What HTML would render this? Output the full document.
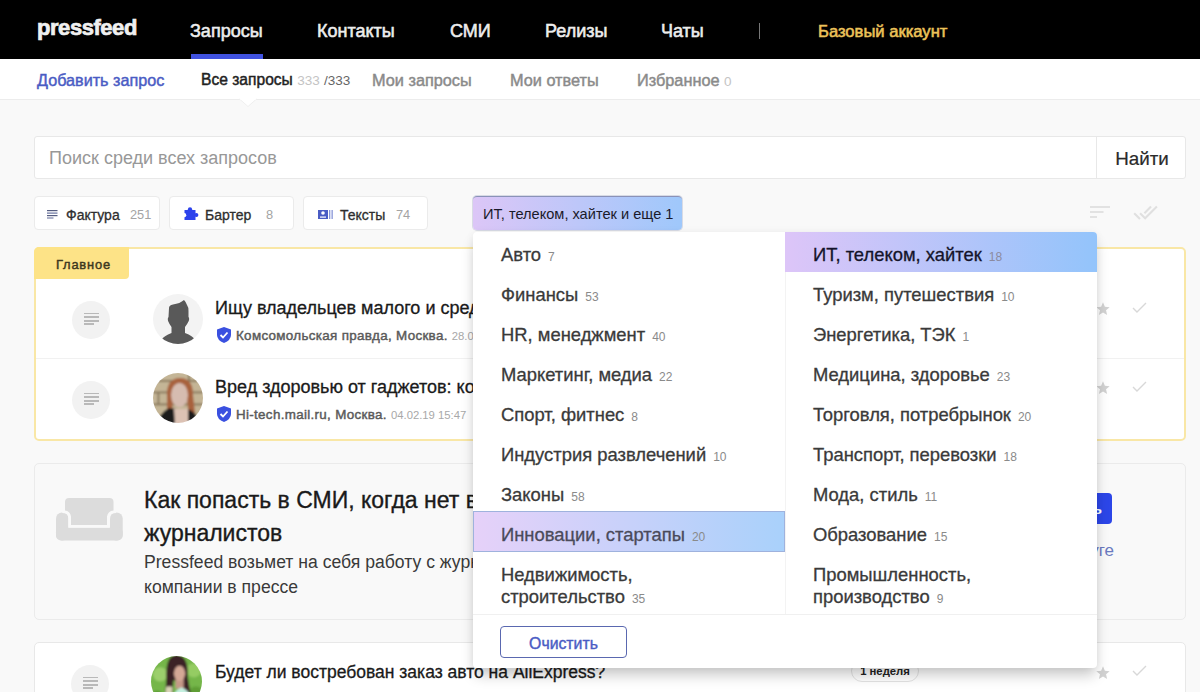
<!DOCTYPE html>
<html><head><meta charset="utf-8">
<style>
*{box-sizing:border-box;margin:0;padding:0}
html,body{width:1200px;height:692px;overflow:hidden;background:#f9f9f9;font-family:"Liberation Sans",sans-serif;color:#222;position:relative}
.a{position:absolute;white-space:nowrap}
#hdr{position:absolute;left:0;top:0;width:1200px;height:59px;background:#000}
#hdr .t{position:absolute;top:20px;font-size:18px;color:#ededed;line-height:22px;-webkit-text-stroke:0.55px currentColor}
#logo{position:absolute;left:37px;top:14px;font-size:22px;font-weight:bold;color:#f0f0f0;letter-spacing:-0.45px;line-height:28px;-webkit-text-stroke:0.7px currentColor}
#ul{position:absolute;left:191px;top:54px;width:72px;height:5px;background:#4052e0}
#sep{position:absolute;left:759px;top:23px;width:1px;height:16px;background:#777}
#sub{position:absolute;left:0;top:59px;width:1200px;height:41px;background:#fff;border-bottom:1px solid #ececec}
#sub .t{position:absolute;top:12px;font-size:16.3px;line-height:18px;color:#8a8a8a;-webkit-text-stroke:0.45px currentColor}
#sub .c{font-size:13.5px;font-weight:normal;color:#c4c4c4;-webkit-text-stroke:0}
#search{position:absolute;left:34px;top:136px;width:1152px;height:43px;background:#fff;border:1px solid #e8e8e8;border-radius:3px}
#search .ph{position:absolute;left:14px;top:11px;font-size:18px;color:#989898;line-height:20px}
#search .btn{position:absolute;right:0;top:0;width:89px;height:41px;border-left:1px solid #e8e8e8;font-size:18.8px;line-height:43px;text-align:center;color:#2a2a2a;padding-left:2px;-webkit-text-stroke:0.2px currentColor}
.chip{position:absolute;top:196px;height:34px;background:#fff;border:1px solid #ebebeb;border-radius:4px;font-size:14px;line-height:32px;color:#333;white-space:nowrap}
.chip .n{position:absolute;top:2px;color:#a4a4a4;font-size:12.8px}
.chip .l{position:absolute;top:1.5px;-webkit-text-stroke:0.3px currentColor;color:#2e2e2e}
.card{position:absolute;left:34px;width:1152px;background:#fff;border:1px solid #e8e8e8;border-radius:5px}
.doc{position:absolute;width:38px;height:38px;border-radius:50%;background:#f2f2f2}
.doc i{position:absolute;left:12px;height:1.8px;background:#b9b9b9}
.title{position:absolute;font-size:18px;line-height:22px;color:#1a1a1a;white-space:nowrap;-webkit-text-stroke:0.3px currentColor}
.meta{position:absolute;font-size:13.4px;letter-spacing:0.32px;line-height:16px;color:#5a5a5a;white-space:nowrap;-webkit-text-stroke:0.45px currentColor}
.meta .d{font-weight:normal;color:#a8a8a8;font-size:11.3px;letter-spacing:0;-webkit-text-stroke:0}
.star{position:absolute;color:#dcdcdc;font-size:18px;line-height:18px}
.chk{position:absolute}
#dd{position:absolute;left:473px;top:232px;width:624px;height:436px;background:#fff;border-radius:4px;box-shadow:0 9px 14px -2px rgba(0,0,0,.22),0 0 8px rgba(0,0,0,.05)}
#dd .it{position:absolute;font-size:18.4px;line-height:22px;color:#3a3a3a;white-space:nowrap;-webkit-text-stroke:0.3px currentColor;margin-top:2px}
#dd .it span{font-size:12px;color:#8a8a8a;margin-left:7px;-webkit-text-stroke:0}
</style></head><body>
<div id="hdr">
  <div id="logo">pressfeed</div>
  <div class="t" style="left:190px">Запросы</div>
  <div class="t" style="left:317px">Контакты</div>
  <div class="t" style="left:450px">СМИ</div>
  <div class="t" style="left:545px">Релизы</div>
  <div class="t" style="left:661px">Чаты</div>
  <div id="sep"></div>
  <div class="t" style="left:818px;top:21px;color:#ecc35a;font-size:16.6px">Базовый аккаунт</div>
  <div id="ul"></div>
</div>
<div id="sub">
  <div class="t" style="left:37px;color:#4a5cc4;font-size:16.2px">Добавить запрос</div>
  <div class="t" style="left:201px;color:#222;font-size:15.6px">Все запросы <span class="c">333</span> <span class="c" style="color:#666">/333</span></div>
  <div class="t" style="left:372px">Мои запросы</div>
  <div class="t" style="left:510px">Мои ответы</div>
  <div class="t" style="left:637px">Избранное <span class="c">0</span></div>
</div>
<svg class="a" style="left:239px;top:98px" width="18" height="10"><path d="M0.5 1 L9 8.5 L17.5 1" fill="#fff" stroke="#efefef" stroke-width="1"/><rect x="1" y="0" width="16" height="1.6" fill="#fff"/></svg>

<div id="search">
  <div class="ph">Поиск среди всех запросов</div>
  <div class="btn">Найти</div>
</div>

<div class="chip" style="left:34px;width:126px">
  <svg class="a" style="left:12px;top:13px" width="11" height="9"><rect y="0" width="10.5" height="1.2" fill="#555d80"/><rect y="2.5" width="10.5" height="1.2" fill="#6a74a0"/><rect y="5" width="10.5" height="1.2" fill="#555d80"/><rect y="7.4" width="6.5" height="1.2" fill="#7a82a8"/></svg>
  <span class="l" style="left:31px">Фактура</span><span class="n" style="left:95px">251</span>
</div>
<div class="chip" style="left:169px;width:125px">
  <svg class="a" style="left:14px;top:10px" width="16" height="14" viewBox="0 0 16 14"><rect x="0.5" y="3" width="11" height="10" fill="#2c42ec"/><circle cx="6" cy="2.3" r="2.1" fill="#2c42ec"/><circle cx="12.3" cy="8" r="2.1" fill="#2c42ec"/><circle cx="0.2" cy="8.2" r="2.1" fill="#fff"/></svg>
  <span class="l" style="left:35px">Бартер</span><span class="n" style="left:96px">8</span>
</div>
<div class="chip" style="left:303px;width:125px">
  <svg class="a" style="left:14px;top:13px" width="15" height="9"><rect x="0" y="0" width="10" height="9" fill="#4a5cc4"/><circle cx="5" cy="3" r="1.8" fill="#fff"/><rect x="2" y="6.5" width="6" height="1.2" fill="#fff"/><rect x="11" y="0" width="1.3" height="9" fill="#8896d8"/><rect x="13.5" y="0" width="1.3" height="9" fill="#8896d8"/></svg>
  <span class="l" style="left:36px">Тексты</span><span class="n" style="left:92px">74</span>
</div>
<div class="a" style="left:473px;top:196px;width:209px;height:34px;border-radius:4px;background:linear-gradient(90deg,#dcc6f7,#9fc8fb);border-top:1px solid #8a92b8;box-shadow:0 0 0 1px rgba(120,130,170,.25);font-size:14.6px;line-height:34px;color:#1a1a2a;padding-left:10px">ИТ, телеком, хайтек и еще 1</div>

<svg class="a" style="left:1089px;top:205px" width="22" height="14"><rect x="1" y="1" width="20" height="2" fill="#e2e2e2"/><rect x="1" y="6" width="13.5" height="2" fill="#e2e2e2"/><rect x="1" y="11" width="7" height="2" fill="#e2e2e2"/></svg>
<svg class="a" style="left:1133px;top:200px" width="25" height="25" viewBox="0 0 24 24"><path fill="#e0e0e0" d="M18 7l-1.41-1.41-6.34 6.34 1.41 1.41L18 7zm4.24-1.41L11.66 16.17 7.48 12l-1.41 1.41L11.66 19l12-12-1.42-1.41zM.41 13.41L6 19l1.41-1.41L1.83 12 .41 13.41z"/></svg>

<!-- Главное card -->
<div class="a" style="left:34px;top:247px;width:1152px;height:194px;background:#fff;border:2px solid #f9e7a6;border-radius:5px"></div>
<div class="a" style="left:34px;top:247px;width:95px;height:32px;background:#fde387;border-radius:5px 0 4px 0;font-size:12.9px;letter-spacing:0.8px;color:#3e3820;line-height:36px;padding-left:22px;-webkit-text-stroke:0.45px currentColor">Главное</div>
<div class="a" style="left:36px;top:358px;width:1148px;height:1px;background:#f1f1f1"></div>

<div class="doc" style="left:72px;top:301px"><i style="top:11.6px;width:15px"></i><i style="top:15.2px;width:15px"></i><i style="top:18.8px;width:15px"></i><i style="top:22.4px;width:9.5px"></i></div>
<svg class="a" style="left:153px;top:294px" width="50" height="50" viewBox="0 0 50 50"><circle cx="25" cy="25" r="25" fill="#f3f3f3"/><clipPath id="c1"><circle cx="25" cy="25" r="25"/></clipPath><g clip-path="url(#c1)" fill="#595959"><path d="M16 14 Q16 11 20 10.5 Q27 9.5 31 6 Q33 8 34 11 Q35.5 13 35.5 17 L35.5 23 Q36.8 24.5 35.5 27.5 Q34 30.5 32 33 L32 39 Q40 42 42 46 L42 52 L8 52 L8 46 Q11 42 18.5 39 L18.5 33 Q16.5 30.5 15.3 27.5 Q14.2 24.5 15.5 23 Z"/></g></svg>
<div class="title" style="left:215px;top:297px">Ищу владельцев малого и среднего бизнеса</div>
<svg class="a" style="left:217px;top:327px" width="14" height="16" viewBox="0 0 14 16"><path d="M7 0 L14 2.5 V8 Q14 13 7 16 Q0 13 0 8 V2.5 Z" fill="#3a50e0"/><path d="M3.5 8 L6 10.5 L10.5 5.5" stroke="#fff" stroke-width="1.8" fill="none"/></svg>
<div class="meta" style="left:236px;top:328px">Комсомольская правда, Москва. <span class="d">28.02.19 12:10</span></div>
<svg class="a" style="left:1095px;top:301px" width="16" height="16" viewBox="0 0 24 24"><path fill="#d2d2d2" d="M12 17.27L18.18 21l-1.64-7.03L22 9.24l-7.19-.61L12 2 9.19 8.63 2 9.24l5.46 4.73L5.82 21z"/></svg>
<svg class="chk" style="left:1132px;top:302px" width="15" height="12"><path d="M1 6 L5 10 L14 1" stroke="#d8d8d8" stroke-width="1.4" fill="none"/></svg>

<div class="doc" style="left:72px;top:381px"><i style="top:11.6px;width:15px"></i><i style="top:15.2px;width:15px"></i><i style="top:18.8px;width:15px"></i><i style="top:22.4px;width:9.5px"></i></div>
<svg class="a" style="left:153px;top:373px" width="50" height="50" viewBox="0 0 50 50"><clipPath id="c2"><circle cx="25" cy="25" r="25"/></clipPath><filter id="bl2" x="-10%" y="-10%" width="120%" height="120%"><feGaussianBlur stdDeviation="1"/></filter><g clip-path="url(#c2)"><g filter="url(#bl2)"><rect x="-2" y="-2" width="54" height="54" fill="#c4b596"/><rect x="-2" y="7" width="54" height="1.8" fill="#857458"/><rect x="-2" y="18.5" width="54" height="1.8" fill="#857458"/><rect x="-2" y="30.5" width="54" height="1.8" fill="#857458"/><rect x="4.5" y="19" width="1.8" height="12" fill="#857458"/><rect x="35" y="1" width="1.8" height="7" fill="#857458"/><path d="M14 24 Q13 5 27 5 Q40 5 40 22 L42 40 L36 44 L34 26 L20 26 L19 40 L14 38 Z" fill="#a8623e"/><ellipse cx="26.5" cy="22" rx="8.5" ry="12" fill="#d6bcb0"/><path d="M4 52 Q6 40 16 35 L24 36 L22 52 Z" fill="#1c1c1c"/><path d="M34 36 Q43 38 46 48 L46 52 L34 52 Z" fill="#1c1c1c"/><path d="M21 36 L35 36 L35 52 L22 52 Z" fill="#dcc2b4"/></g></g></svg>
<div class="title" style="left:215px;top:376px">Вред здоровью от гаджетов: кого это касается</div>
<svg class="a" style="left:217px;top:406px" width="14" height="16" viewBox="0 0 14 16"><path d="M7 0 L14 2.5 V8 Q14 13 7 16 Q0 13 0 8 V2.5 Z" fill="#3a50e0"/><path d="M3.5 8 L6 10.5 L10.5 5.5" stroke="#fff" stroke-width="1.8" fill="none"/></svg>
<div class="meta" style="left:236px;top:407px">Hi-tech.mail.ru, Москва. <span class="d">04.02.19 15:47</span></div>
<svg class="a" style="left:1095px;top:380px" width="16" height="16" viewBox="0 0 24 24"><path fill="#d2d2d2" d="M12 17.27L18.18 21l-1.64-7.03L22 9.24l-7.19-.61L12 2 9.19 8.63 2 9.24l5.46 4.73L5.82 21z"/></svg>
<svg class="chk" style="left:1132px;top:381px" width="15" height="12"><path d="M1 6 L5 10 L14 1" stroke="#d8d8d8" stroke-width="1.4" fill="none"/></svg>

<!-- promo card -->
<div class="a" style="left:34px;top:463px;width:1152px;height:157px;background:#f9f9f9;border:1.5px solid #ebebeb;border-radius:5px"></div>
<svg class="a" style="left:55px;top:497px" width="69" height="44" viewBox="0 0 69 44"><rect x="1" y="15.5" width="12.5" height="28" rx="6" fill="#dcdcdc"/><rect x="55" y="15.5" width="12.7" height="28" rx="6" fill="#dcdcdc"/><rect x="1" y="30.5" width="66.7" height="13" rx="5" fill="#dcdcdc"/><path d="M14 1 H54.5 Q58.5 1 58.5 5 V13.5 Q53 14 52 19.5 V28 H16 V19.5 Q15 14 10 13.5 V5 Q10 1 14 1 Z" fill="#dcdcdc" stroke="#f9f9f9" stroke-width="5.4" paint-order="stroke"/></svg>
<div class="a" style="left:144px;top:484px;font-size:23px;line-height:32.5px;color:#1a1a1a;-webkit-text-stroke:0.35px currentColor">Как попасть в СМИ, когда нет возможности общаться с<br>журналистов</div>
<div class="a" style="left:144px;top:550px;font-size:17.6px;line-height:25px;color:#3a3a3a">Pressfeed возьмет на себя работу с журналистами и размещение<br>компании в прессе</div>
<div class="a" style="left:972px;top:493px;width:140px;height:31px;background:#2c46e8;border-radius:4px;color:#fff;font-size:15px;font-weight:bold;line-height:31px;text-align:right;padding-right:10px">Подключить</div>
<div class="a" style="left:900px;top:541px;width:214px;text-align:right;font-size:17px;line-height:20px;color:#6a7ac0">Об услуге</div>

<!-- card 3 -->
<div class="a" style="left:34px;top:642px;width:1152px;height:80px;background:#fff;border:1px solid #e8e8e8;border-radius:5px"></div>
<div class="doc" style="left:71px;top:665px"><i style="top:11.6px;width:15px"></i><i style="top:15.2px;width:15px"></i><i style="top:18.8px;width:15px"></i><i style="top:22.4px;width:9.5px"></i></div>
<svg class="a" style="left:151px;top:656px" width="51" height="51" viewBox="0 0 50 50"><clipPath id="c3"><circle cx="25" cy="25" r="25"/></clipPath><filter id="bl3" x="-10%" y="-10%" width="120%" height="120%"><feGaussianBlur stdDeviation="0.9"/></filter><g clip-path="url(#c3)"><g filter="url(#bl3)"><rect x="-2" y="-2" width="54" height="54" fill="#74b64a"/><circle cx="9" cy="18" r="7" fill="#9ccf6c"/><circle cx="42" cy="14" r="7" fill="#95cc64"/><circle cx="44" cy="38" r="8" fill="#5e9e36"/><circle cx="6" cy="40" r="6" fill="#5a9a34"/><path d="M15 22 Q14 -1 25 -1 Q37 -1 36 20 L39 38 L31 38 L31 24 L22 24 L21 38 L14 37 Z" fill="#3b2226"/><rect x="24" y="22" width="8" height="10" fill="#c49888"/><ellipse cx="28" cy="17" rx="5.5" ry="7.5" fill="#d4a896"/><path d="M12 52 L15 30 L21 30 L20 52 Z" fill="#d8d2b4"/><path d="M19 52 Q21 33 30 31 Q39 33 43 52 Z" fill="#c4f0e0"/></g></g></svg>
<div class="title" style="left:215px;top:661px;font-size:17.5px">Будет ли востребован заказ авто на AliExpress?</div>
<div class="a" style="left:851px;top:660px;width:68px;height:22px;border:1px solid #e4e4e4;border-radius:11px;background:#fff;font-size:11.3px;font-weight:bold;line-height:20px;text-align:center;color:#222">1 неделя</div>
<svg class="a" style="left:1095px;top:665px" width="16" height="16" viewBox="0 0 24 24"><path fill="#d2d2d2" d="M12 17.27L18.18 21l-1.64-7.03L22 9.24l-7.19-.61L12 2 9.19 8.63 2 9.24l5.46 4.73L5.82 21z"/></svg>
<svg class="chk" style="left:1132px;top:665px" width="15" height="12"><path d="M1 6 L5 10 L14 1" stroke="#d8d8d8" stroke-width="1.4" fill="none"/></svg>

<!-- dropdown -->
<div id="dd">
  <div class="a" style="left:312px;top:0;width:312px;height:40px;background:linear-gradient(90deg,#ddc5f8,#93c4fb);border-radius:0 4px 0 0"></div>
  <div class="a" style="left:0;top:279px;width:312px;height:41px;background:linear-gradient(90deg,#e6d1f9,#a9d1fb);border:1px solid #9fb2dd"></div>
  <div class="a" style="left:312px;top:40px;width:1px;height:342px;background:#f3f3f3"></div>
  <div class="a" style="left:0;top:382px;width:624px;height:1px;background:#f0f0f0"></div>

  <div class="it" style="left:28px;top:10px">Авто<span>7</span></div>
  <div class="it" style="left:28px;top:50px">Финансы<span>53</span></div>
  <div class="it" style="left:28px;top:90px">HR, менеджмент<span>40</span></div>
  <div class="it" style="left:28px;top:130px">Маркетинг, медиа<span>22</span></div>
  <div class="it" style="left:28px;top:170px">Спорт, фитнес<span>8</span></div>
  <div class="it" style="left:28px;top:210px">Индустрия развлечений<span>10</span></div>
  <div class="it" style="left:28px;top:250px">Законы<span>58</span></div>
  <div class="it" style="left:28px;top:290px;color:#4a4a5a">Инновации, стартапы<span>20</span></div>
  <div class="it" style="left:28px;top:330px">Недвижимость,<br>строительство<span>35</span></div>

  <div class="it" style="left:340px;top:10px;color:#14142a">ИТ, телеком, хайтек<span style="color:#8a8aa0">18</span></div>
  <div class="it" style="left:340px;top:50px">Туризм, путешествия<span>10</span></div>
  <div class="it" style="left:340px;top:90px">Энергетика, ТЭК<span>1</span></div>
  <div class="it" style="left:340px;top:130px">Медицина, здоровье<span>23</span></div>
  <div class="it" style="left:340px;top:170px">Торговля, потребрынок<span>20</span></div>
  <div class="it" style="left:340px;top:210px">Транспорт, перевозки<span>18</span></div>
  <div class="it" style="left:340px;top:250px">Мода, стиль<span>11</span></div>
  <div class="it" style="left:340px;top:290px">Образование<span>15</span></div>
  <div class="it" style="left:340px;top:330px">Промышленность,<br>производство<span>9</span></div>

  <div class="a" style="left:27px;top:394px;width:127px;height:32px;border:1px solid #5a68b0;border-radius:4px;font-size:15.8px;color:#4a5cc4;line-height:33px;text-align:center;-webkit-text-stroke:0.4px currentColor">Очистить</div>
</div>
</body></html>
